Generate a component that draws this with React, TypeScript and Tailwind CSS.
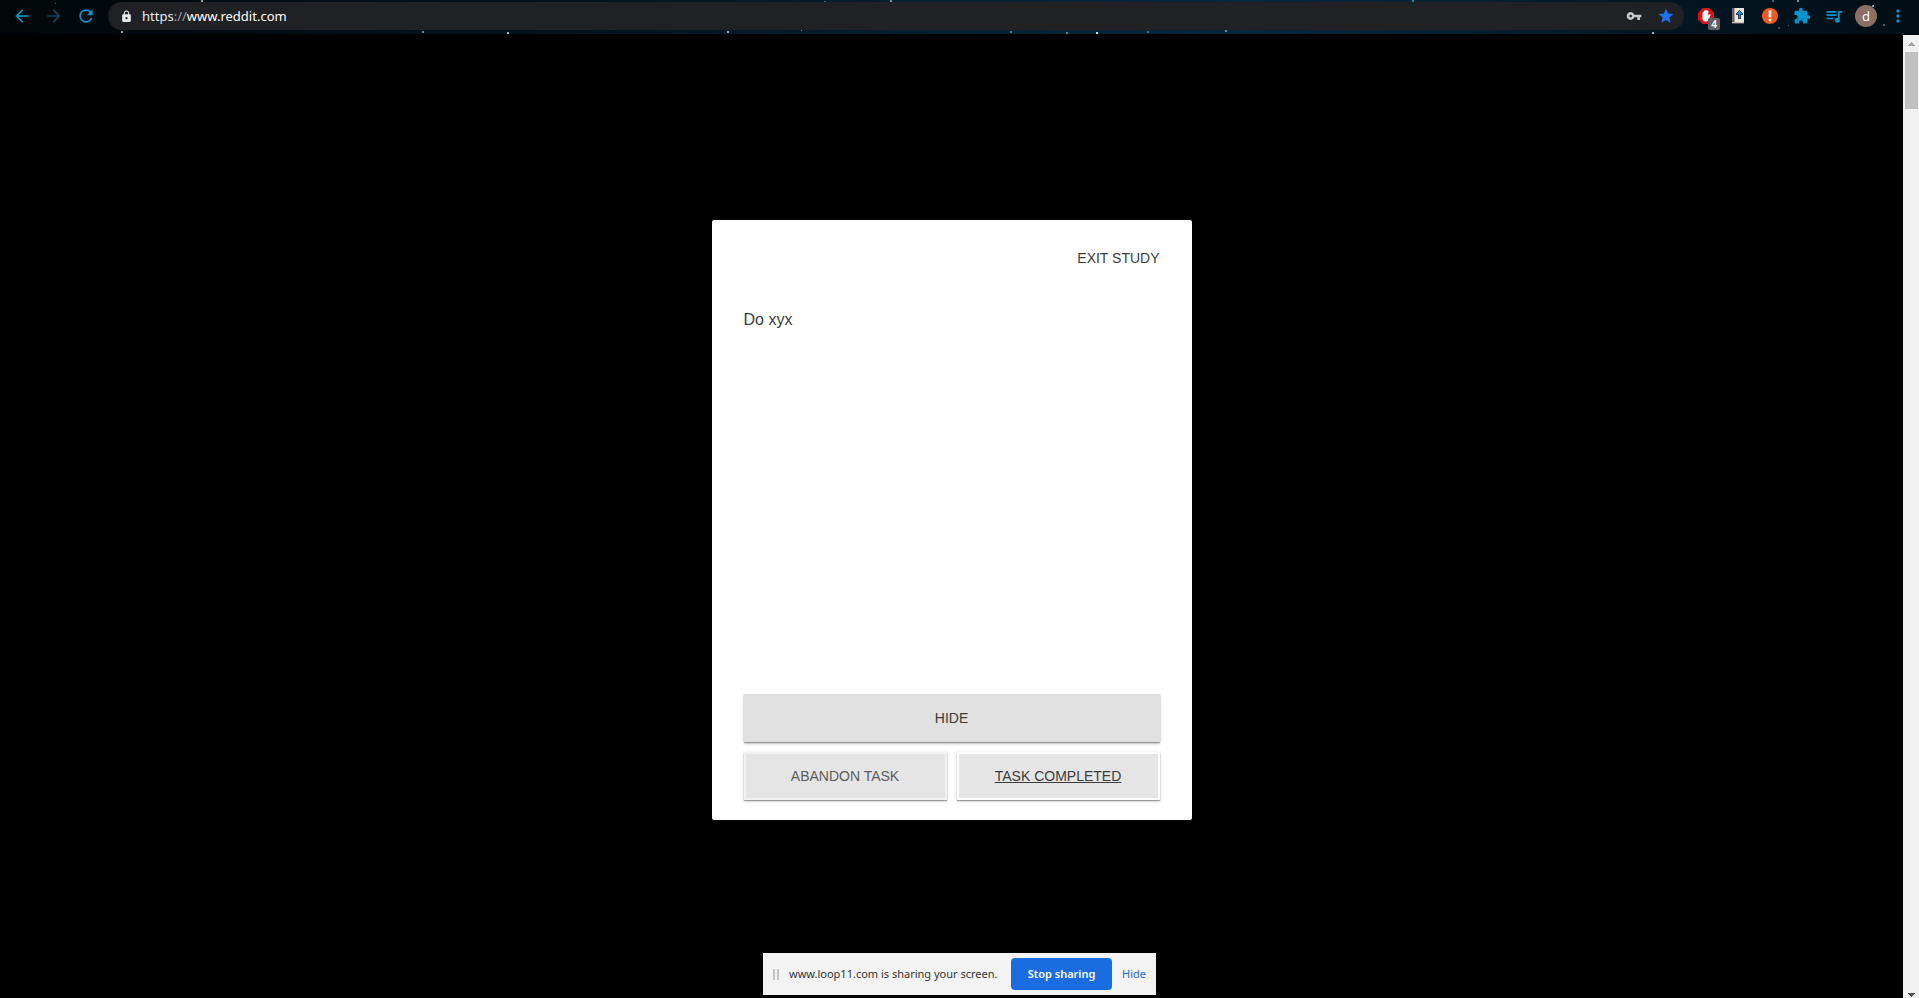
import type { ReactNode } from 'react';
import {
  MdArrowBack,
  MdArrowForward,
  MdExtension,
  MdLock,
  MdMoreVert,
  MdQueueMusic,
  MdRefresh,
  MdStar,
  MdVpnKey,
} from 'react-icons/md';

type Star = { x: number; y: number; size: number; color: string };

const stars: Star[] = [
  { x: 55, y: 3, size: 1, color: '#4b5457' },
  { x: 121, y: 31, size: 2, color: '#9aa5a8' },
  { x: 201, y: 0, size: 2, color: '#9aa5a8' },
  { x: 422, y: 31, size: 2, color: '#6f8587' },
  { x: 507, y: 32, size: 2, color: '#8fb5b5' },
  { x: 727, y: 31, size: 2, color: '#86abc0' },
  { x: 801, y: 30, size: 1, color: '#6f8587' },
  { x: 824, y: 1, size: 2, color: '#3a5f7d' },
  { x: 890, y: 0, size: 2, color: '#7890a0' },
  { x: 1010, y: 31, size: 2, color: '#4d7d9a' },
  { x: 1066, y: 32, size: 2, color: '#5c8196' },
  { x: 1096, y: 32, size: 2, color: '#c4dcec' },
  { x: 1147, y: 31, size: 2, color: '#436f7d' },
  { x: 1225, y: 30, size: 2, color: '#5b93a5' },
  { x: 1412, y: 0, size: 2, color: '#2585a8' },
  { x: 1652, y: 32, size: 2, color: '#9aaeb5' },
  { x: 1772, y: 0, size: 2, color: '#256880' },
  { x: 1778, y: 27, size: 2, color: '#3c4a50' },
  { x: 1788, y: 25, size: 1, color: '#4b5457' },
  { x: 1797, y: 0, size: 2, color: '#7890a0' },
  { x: 1872, y: 5, size: 2, color: '#8094a0' },
  { x: 1883, y: 24, size: 2, color: '#4b5457' },
];

function Starfield() {
  return (
    <svg className="absolute inset-0 size-full" aria-hidden="true">
      {stars.map((s) => (
        <rect
          key={`${s.x}-${s.y}`}
          x={`${(s.x / 1919) * 100}%`}
          y={s.y}
          width={s.size}
          height={s.size}
          fill={s.color}
        />
      ))}
    </svg>
  );
}

function BarButton({ label, children }: { label: string; children: ReactNode }) {
  return (
    <button
      type="button"
      aria-label={label}
      className="relative flex h-7 w-8 shrink-0 items-center justify-center text-[#0096cd]"
    >
      {children}
    </button>
  );
}

function BlockerIcon() {
  return (
    <>
      <svg viewBox="0 0 16 16" className="size-4">
        <path d="M4.7 0h6.6L16 4.7v6.6L11.3 16H4.7L0 11.3V4.7z" fill="#e01010" />
        <path
          d="M4.500 8.200V4.800c0-1 1.300-1 1.300 0V3c0-1 1.500-1 1.500 0v-.6c0-1 1.500-1 1.500 0V3c0-1 1.500-1 1.500 0v4.800l.9-1.200c.6-.7 1.700-.1 1.300.7l-1.900 4.200c-.5 1.200-1.300 1.900-2.600 1.900H7.400C5.500 13.400 4.500 12 4.500 10.400z"
          fill="#fff"
        />
      </svg>
      <span className="absolute top-4 left-[18px] flex h-3 w-3 items-center justify-center rounded-xs bg-[#5f6164] text-[10px] leading-3 font-semibold text-white">
        4
      </span>
    </>
  );
}

function BookIcon() {
  return (
    <svg viewBox="0 0 14 16" className="h-4 w-3.5" shapeRendering="crispEdges">
      <path d="M1 0h12v16H1z" fill="#ece6d6" />
      <path d="M1 0h2v14H1z" fill="#6c5f6b" />
      <path d="M3 0h1v14H3z" fill="#aaa0a8" />
      <path d="M1 14h12v1H1z" fill="#c9c2b4" />
      <path d="M1 15h12v1H1z" fill="#54485a" />
      <path d="M8 2h1v1h1v1h1v1h1v2h-2v4H7V7H5V5h1V4h1V3h1z" fill="#24415f" />
      <path d="M8 3h1v1h1v1h1v1H9v4H8V6H6V5h1V4h1z" fill="#2b8de0" />
    </svg>
  );
}

function AlertIcon() {
  return (
    <svg viewBox="0 0 16 16" className="size-4">
      <circle cx="8" cy="8" r="8" fill="#f15a24" />
      <path d="M6.7 2.5h2.6v6.8H6.7zM6.7 10.800h2.600v2.400H6.700z" fill="#fff" />
    </svg>
  );
}

function BrowserBar() {
  return (
    <header className="relative flex h-[34px] shrink-0 items-start gap-1.5 bg-linear-to-r from-[#020608] via-[#03283f] via-65% to-[#020d14] pt-0.5 pr-[5px] pl-1.5">
      <Starfield />
      <nav className="relative flex" aria-label="History">
        <BarButton label="Back">
          <MdArrowBack size={20} />
        </BarButton>
        <BarButton label="Forward">
          <MdArrowForward size={20} className="text-[#044a62]" />
        </BarButton>
        <BarButton label="Reload">
          <MdRefresh size={20} />
        </BarButton>
      </nav>
      <div className="relative flex h-7 min-w-0 flex-1 items-center rounded-full bg-[#202124] pl-3">
        <MdLock size={13} className="shrink-0 text-[#e8eaed]" />
        <a
          href="https://www.reddit.com"
          className="ml-[9px] flex-1 truncate text-[13px] leading-5 text-white"
        >
          <span className="text-[#e8eaed]">https</span>
          <span className="text-[#9aa0a6]">://</span>www.reddit.com
        </a>
        <button type="button" aria-label="Passwords" className="flex w-8 justify-center text-[#c4c7ca]">
          <MdVpnKey size={16} />
        </button>
        <button type="button" aria-label="Bookmark" className="mr-0.5 flex w-8 justify-center text-[#1a73e8]">
          <MdStar size={18} />
        </button>
      </div>
      <div className="relative flex">
        <BarButton label="Ad blocker">
          <BlockerIcon />
        </BarButton>
        <BarButton label="Dictionary">
          <BookIcon />
        </BarButton>
        <BarButton label="Alert">
          <AlertIcon />
        </BarButton>
        <BarButton label="Extensions">
          <MdExtension size={18} />
        </BarButton>
        <BarButton label="Media">
          <MdQueueMusic size={20} />
        </BarButton>
        <BarButton label="Profile">
          <span className="flex size-[22px] items-center justify-center rounded-full bg-[#8d6e63] text-[13px] leading-5 text-white">
            d
          </span>
        </BarButton>
        <BarButton label="Menu">
          <MdMoreVert size={20} />
        </BarButton>
      </div>
    </header>
  );
}

function TaskCard() {
  return (
    <section className="flex h-[600px] w-[480px] flex-col rounded-xs bg-white px-8 pt-7 pb-5 font-['Liberation_Sans',Arial,sans-serif] text-[#3c3c3c]">
      <button type="button" className="self-end text-sm leading-5">
        EXIT STUDY
      </button>
      <p className="mt-10 text-base leading-6">Do xyx</p>
      <button
        type="button"
        className="mt-auto h-12 bg-[#e1e1e1] text-sm shadow-[0_1px_1px_rgba(0,0,0,0.3),0_2px_3px_rgba(0,0,0,0.2)]"
      >
        HIDE
      </button>
      <div className="mt-2.5 grid grid-cols-2 gap-2.5">
        <button
          type="button"
          className="h-12 border-2 border-[#f2f2f2] bg-[#e5e5e5] text-sm text-[#5c5c5c] shadow-[0_1px_1px_rgba(0,0,0,0.3),0_1px_3px_rgba(0,0,0,0.2)]"
        >
          ABANDON TASK
        </button>
        <button
          type="button"
          className="h-12 border-2 border-white bg-[#e5e5e5] text-sm underline shadow-[0_1px_1px_rgba(0,0,0,0.3),0_1px_3px_rgba(0,0,0,0.2)]"
        >
          TASK COMPLETED
        </button>
      </div>
    </section>
  );
}

function Scrollbar() {
  return (
    <div className="flex w-4 shrink-0 flex-col items-center bg-[#f1f1f1]" aria-hidden="true">
      <svg viewBox="0 0 16 17" className="h-[17px] w-4" shapeRendering="crispEdges">
        <path d="M8 7h1v1h1v1h1v1h1v1H5v-1h1V9h1V8h1z" fill="#a3a3a3" />
      </svg>
      <div className="h-[57px] w-[13px] bg-[#c1c1c1]" />
      <svg viewBox="0 0 16 16" className="mt-auto size-4" shapeRendering="crispEdges">
        <path d="M5 11h7v1h-1v1h-1v1H9v1H8v-1H7v-1H6v-1H5z" fill="#505050" />
      </svg>
    </div>
  );
}

function ShareBar() {
  return (
    <div className="fixed inset-x-0 bottom-[3px] flex justify-center">
      <div className="flex h-[42px] items-center gap-2.5 bg-[#f3f3f3] px-2.5 text-[11px] text-[#333]">
        <div className="flex gap-0.5" aria-hidden="true">
          <span className="h-[11px] w-0.5 bg-[#c4c4c4]" />
          <span className="h-[11px] w-0.5 bg-[#c4c4c4]" />
        </div>
        <span className="min-w-[212px] whitespace-nowrap">www.loop11.com is sharing your screen.</span>
        <button type="button" className="h-8 w-[101px] rounded-sm bg-[#1a6de0] font-semibold text-white">
          Stop sharing
        </button>
        <button type="button" className="text-[#2a68d8]">
          Hide
        </button>
      </div>
    </div>
  );
}

export default function App() {
  return (
    <div className="flex min-h-screen flex-col bg-black font-['Noto_Sans','Open_Sans',sans-serif]">
      <BrowserBar />
      <div className="mt-px flex flex-1">
        <main className="flex flex-1 items-center justify-center pt-[7px]">
          <TaskCard />
        </main>
        <Scrollbar />
      </div>
      <ShareBar />
    </div>
  );
}
